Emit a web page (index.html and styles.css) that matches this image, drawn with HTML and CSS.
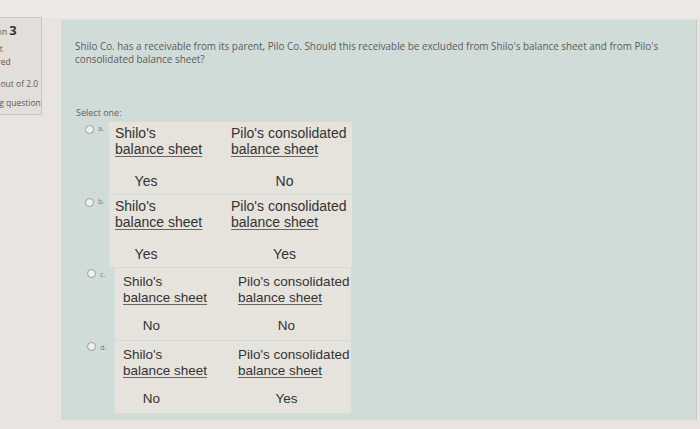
FILE: index.html
```html
<!DOCTYPE html>
<html>
<head>
<meta charset="utf-8">
<link rel="stylesheet" href="styles.css">
</head>
<body>
<div class="topbar"></div>
<div class="layout">
  <div class="info">
    <div class="qno">Question <b>3</b></div>
    <div class="state">Not yet</div>
    <div class="state red">answered</div>
    <div class="grade">Marked out of 2.0</div>
    <div class="flag"><svg class="flagicon" width="12" height="10" viewBox="0 0 12 10"><path d="M1 0v10M1 1h8l-2 2.5 2 2.5H1" fill="none" stroke="#777" stroke-width="1"/></svg>Flag question</div>
  </div>
  <div class="content">
    <p class="qtext">Shilo Co. has a receivable from its parent, Pilo Co. Should this receivable be excluded from Shilo's balance sheet and from Pilo's consolidated balance sheet?</p>
    <p class="prompt">Select one:</p>
    <div class="answers">
      <div class="option">
        <span class="radio"></span><span class="letter">a.</span>
        <div class="tbl">
          <div class="hd"><span>Shilo's</span><u>balance sheet</u></div>
          <div class="hd"><span>Pilo's consolidated</span><u>balance sheet</u></div>
          <div class="val v1">Yes</div>
          <div class="val v2">No</div>
        </div>
      </div>
      <div class="option">
        <span class="radio"></span><span class="letter">b.</span>
        <div class="tbl">
          <div class="hd"><span>Shilo's</span><u>balance sheet</u></div>
          <div class="hd"><span>Pilo's consolidated</span><u>balance sheet</u></div>
          <div class="val v1">Yes</div>
          <div class="val v2">Yes</div>
        </div>
      </div>
      <div class="option shifted">
        <span class="radio"></span><span class="letter">c.</span>
        <div class="tbl">
          <div class="hd"><span>Shilo's</span><u>balance sheet</u></div>
          <div class="hd"><span>Pilo's consolidated</span><u>balance sheet</u></div>
          <div class="val v1">No</div>
          <div class="val v2">No</div>
        </div>
      </div>
      <div class="option shifted">
        <span class="radio"></span><span class="letter">d.</span>
        <div class="tbl">
          <div class="hd"><span>Shilo's</span><u>balance sheet</u></div>
          <div class="hd"><span>Pilo's consolidated</span><u>balance sheet</u></div>
          <div class="val v1">No</div>
          <div class="val v2">Yes</div>
        </div>
      </div>
    </div>
  </div>
</div>
</body>
</html>
```

FILE: styles.css
```css
html, body {
  margin: 0;
  padding: 0;
}
body {
  width: 700px;
  height: 429px;
  overflow: hidden;
  background: #e8e4e0;
  font-family: "Open Sans", "Liberation Sans", sans-serif;
}
.topbar {
  height: 18px;
  background: #ece9e6;
}
.layout {
  display: flex;
  align-items: flex-start;
}
.info {
  flex: none;
  width: 73px;
  margin-left: -31px;
  margin-top: -1px;
  padding: 6px 0 8px 1px;
  box-sizing: border-box;
  height: 98px;
  background: #e2deda;
  border: 1px solid #c9c5c1;
  color: #5d5a58;
  font-size: 8.5px;
  line-height: 13px;
}
.qno {
  font-size: 8.5px;
  height: 18px;
  white-space: nowrap;
}
.qno b {
  font-size: 13px;
  color: #333;
}
.state {
  margin-left: 3px;
  white-space: nowrap;
}
.red {
  color: #7a4a40;
  margin-left: 1px;
}
.grade {
  margin: 9px 0 0 -3px;
  white-space: nowrap;
}
.flag {
  margin-top: 6px;
  white-space: nowrap;
  display: flex;
  align-items: center;
}
.flagicon {
  flex: none;
  margin-right: 5px;
}
.content {
  flex: none;
  margin-left: 19px;
  margin-top: 2px;
  width: 636px;
  height: 400px;
  box-sizing: border-box;
  padding: 20px 14px 0 14px;
  background: #d0dcd8;
  border-right: 1px solid #c3ccc9;
}
.qtext {
  margin: 0;
  font-size: 9.9px;
  line-height: 13px;
  color: #5a5c5b;
  width: 600px;
}
.prompt {
  margin: 41px 0 0 1px;
  font-size: 9px;
  line-height: 12px;
  color: #5f6160;
}
.answers {
  margin-top: 3px;
  display: flex;
  flex-direction: column;
  gap: 1px;
}
.option {
  display: flex;
  align-items: flex-start;
}
.radio {
  flex: none;
  width: 7px;
  height: 7px;
  border: 1px solid #9a9c9b;
  border-radius: 50%;
  background: #f0f0ee;
  margin: 3px 0 0 10px;
}
.letter {
  flex: none;
  width: 11px;
  margin-left: 4px;
  font-size: 7.5px;
  line-height: 12px;
  color: #7d7f7e;
}
.tbl {
  width: 243px;
  height: 72px;
  box-sizing: border-box;
  background: #e6e2dc;
  display: grid;
  grid-template-columns: 116px 1fr;
  grid-template-rows: 36px 36px;
  font-family: "Liberation Sans", Arial, sans-serif;
  font-size: 14px;
  line-height: 16px;
  color: #333;
}
.hd {
  display: flex;
  flex-direction: column;
  padding: 3px 0 0 6px;
  white-space: nowrap;
}
.hd u {
  text-decoration-color: #666;
  text-underline-offset: 2px;
}
.val {
  text-align: center;
  padding-top: 15px;
}
.v1 {
  padding-right: 42px;
}
.v2 {
  padding-right: 8px;
}
.shifted .radio {
  margin-left: 12px;
  margin-top: 1px;
}
.shifted .tbl {
  margin-left: 4px;
  width: 236px;
  font-size: 13.5px;
  grid-template-columns: 115px 1fr;
}
.shifted .hd {
  padding-top: 6px;
  padding-left: 8px;
}
.shifted .val {
  padding-top: 14px;
}
```
